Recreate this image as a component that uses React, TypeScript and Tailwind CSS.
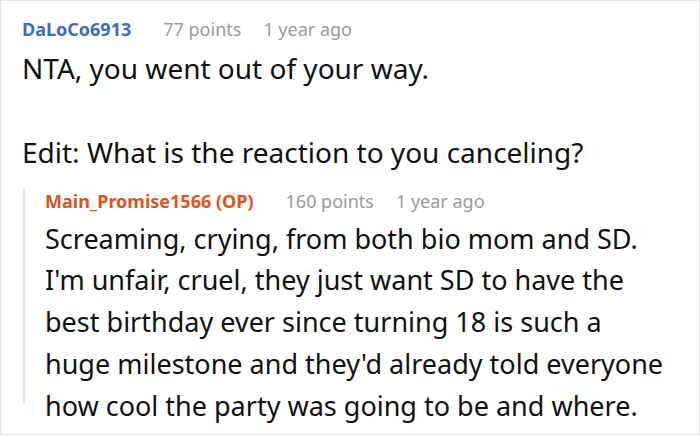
export default function App() {
  const replyLines = [
    "Screaming, crying, from both bio mom and SD.",
    "I'm unfair, cruel, they just want SD to have the",
    "best birthday ever since turning 18 is such a",
    "huge milestone and they'd already told everyone",
    "how cool the party was going to be and where.",
  ];
  return (
    <div className="w-[700px] h-[435px] bg-white border border-[#e3e3e3] overflow-hidden font-['Noto_Sans','Open_Sans',sans-serif]">
      <div className="pl-[21px] pt-[15px]">
        <div className="flex items-baseline text-[18px] leading-[27px]">
          <span className="font-bold text-[#3b6cc0]">DaLoCo6913</span>
          <span className="ml-[32px] text-[#9a9a9a]">77 points</span>
          <span className="ml-[22px] text-[#9a9a9a]">1 year ago</span>
        </div>
        <div className="mt-[4px] text-[28px] leading-[42px] text-[#111]">
          <p>NTA, you went out of your way.</p>
          <p className="h-[42px]"></p>
          <p>Edit: What is the reaction to you canceling?</p>
        </div>
        <div className="mt-[28px] ml-[1px] h-[216px] border-l-2 border-[#e3e3e3] pl-[20px]">
          <div className="-mt-[13.5px] flex items-baseline text-[18px] leading-[27px]">
            <span className="font-bold text-[#d9541e]">Main_Promise1566 (OP)</span>
            <span className="ml-[32px] text-[#9a9a9a]">160 points</span>
            <span className="ml-[22px] text-[#9a9a9a]">1 year ago</span>
          </div>
          <p className="mt-[3px] whitespace-nowrap text-[27px] leading-[41.75px] text-[#111]">
            {replyLines.map((l, i) => (
              <span key={i} className="block">{l}</span>
            ))}
          </p>
        </div>
      </div>
    </div>
  );
}
